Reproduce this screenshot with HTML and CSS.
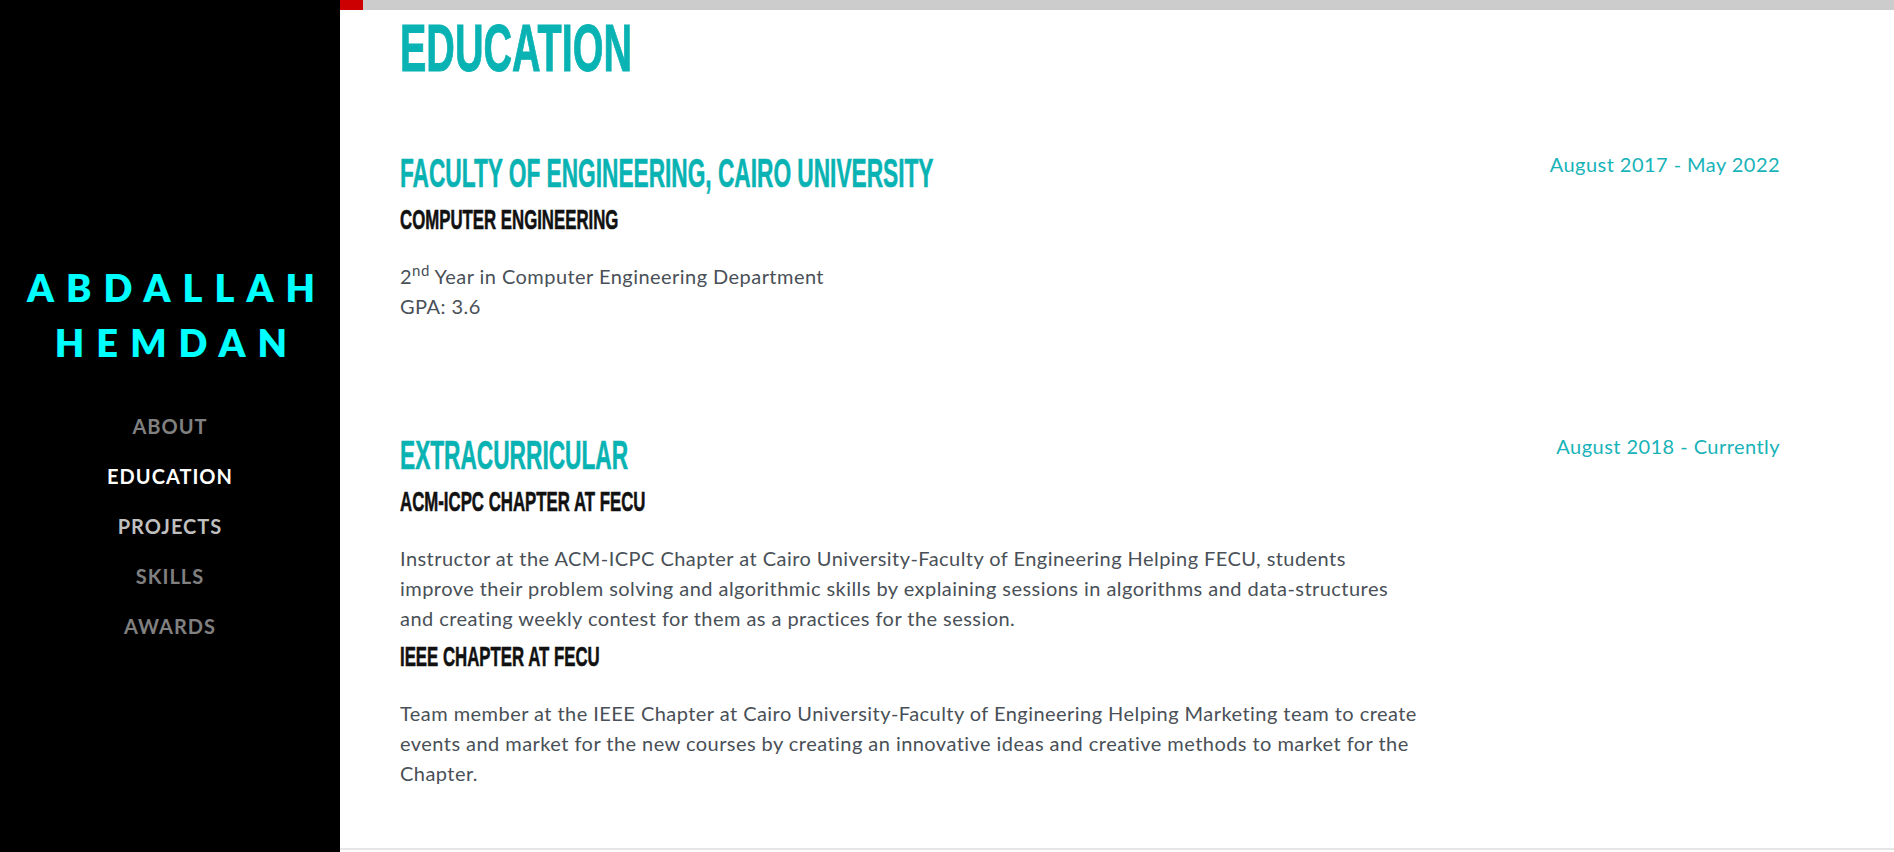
FILE: index.html
```html
<!DOCTYPE html>
<html lang="en">
<head>
<meta charset="utf-8">
<title>Abdallah Hemdan - Resume</title>
<link rel="stylesheet" href="styles.css">
</head>
<body>
<div class="progress-track"><div class="progress-fill"></div></div>
<div class="layout">
  <nav class="sidenav">
    <h1 class="brand"><span>Abdallah</span><span>Hemdan</span></h1>
    <ul class="nav-list">
      <li><a class="nav-link" href="#about">About</a></li>
      <li><a class="nav-link active" href="#education">Education</a></li>
      <li><a class="nav-link hover" href="#projects">Projects</a></li>
      <li><a class="nav-link" href="#skills">Skills</a></li>
      <li><a class="nav-link" href="#awards">Awards</a></li>
    </ul>
  </nav>
  <main class="main">
    <section class="resume-section" id="education">
      <h2 class="section-title"><span class="cond-big">Education</span></h2>
      <div class="resume-item first">
        <div class="resume-content">
          <h3 class="item-title"><span class="cond">Faculty of Engineering, Cairo University</span></h3>
          <div class="subheading"><span class="cond-sub">Computer Engineering</span></div>
          <p class="body-text">2<sup>nd</sup> Year in Computer Engineering Department<br>GPA: 3.6</p>
        </div>
        <div class="resume-date">August 2017 - May 2022</div>
      </div>
      <div class="resume-item">
        <div class="resume-content">
          <h3 class="item-title"><span class="cond">Extracurricular</span></h3>
          <div class="subheading"><span class="cond-sub">ACM-ICPC Chapter at FECU</span></div>
          <p class="body-text tight">Instructor at the ACM-ICPC Chapter at Cairo University-Faculty of Engineering Helping FECU, students improve their problem solving and algorithmic skills by explaining sessions in algorithms and data-structures and creating weekly contest for them as a practices for the session.</p>
          <div class="subheading"><span class="cond-sub">IEEE Chapter at FECU</span></div>
          <p class="body-text">Team member at the IEEE Chapter at Cairo University-Faculty of Engineering Helping Marketing team to create events and market for the new courses by creating an innovative ideas and creative methods to market for the Chapter.</p>
        </div>
        <div class="resume-date">August 2018 - Currently</div>
      </div>
    </section>
    <hr class="divider">
  </main>
</div>
</body>
</html>
```
FILE: styles.css
```css
* { box-sizing: border-box; }
html, body { margin: 0; padding: 0; }
body {
  font-family: Lato, "Noto Sans", sans-serif;
  font-size: 20px;
  line-height: 30px;
  letter-spacing: 0.45px;
  color: #495057;
  background: #fff;
  overflow: hidden;
}
.progress-track {
  position: fixed;
  top: 0;
  left: 340px;
  right: 0;
  height: 10px;
  background: #cccccc;
  z-index: 10;
}
.progress-fill {
  width: 23px;
  height: 100%;
  background: #cc0000;
}
.layout {
  display: flex;
  min-height: 852px;
}
.sidenav {
  width: 340px;
  flex-shrink: 0;
  height: 852px;
  background: #000;
  display: flex;
  flex-direction: column;
  justify-content: center;
  align-items: center;
  padding-top: 58px;
}
.brand {
  margin: 0 0 31px 0;
  font-family: Lato, sans-serif;
  font-weight: 800;
  font-size: 38px;
  line-height: 55px;
  letter-spacing: 12px;
  color: #00ffff;
  text-transform: uppercase;
  text-align: center;
  display: flex;
  flex-direction: column;
  align-items: center;
}
.brand span { padding-left: 14px; }
.nav-list {
  list-style: none;
  margin: 0;
  padding: 0;
  display: flex;
  flex-direction: column;
  align-items: center;
}
.nav-link {
  display: block;
  padding: 10px 0;
  line-height: 30px;
  font-size: 20px;
  font-weight: 700;
  letter-spacing: 1px;
  text-transform: uppercase;
  text-decoration: none;
  color: #808080;
}
.nav-link.active { color: #ffffff; }
.nav-link.hover { color: #bfbfbf; }
.main {
  flex: 1;
  min-width: 0;
}
.resume-section {
  max-width: 1500px;
  padding: 8px 60px 60px 60px;
}
.section-title {
  margin: 0 0 61px 0;
  font-family: "Liberation Sans", Arial, sans-serif;
  font-weight: 700;
  font-size: 67px;
  line-height: 80px;
  letter-spacing: 0;
  color: #0ab3b3;
  text-transform: uppercase;
  -webkit-text-stroke: 1px #0ab3b3;
}
.cond-big {
  display: inline-block;
  transform: scaleX(0.59);
  transform-origin: left center;
  white-space: nowrap;
}
.cond {
  display: inline-block;
  transform: scaleX(0.567);
  transform-origin: left center;
  white-space: nowrap;
}
.cond-sub {
  display: inline-block;
  transform: scaleX(0.6);
  transform-origin: left center;
  white-space: nowrap;
}
.resume-item {
  display: flex;
  justify-content: space-between;
  align-items: flex-start;
}
.resume-item.first { margin-bottom: 110px; }
.resume-content {
  flex: 1;
  min-width: 0;
}
.item-title {
  margin: 0 0 6px 0;
  font-family: "Liberation Sans", Arial, sans-serif;
  font-weight: 700;
  font-size: 40px;
  line-height: 48px;
  letter-spacing: 0;
  color: #0ab3b3;
  text-transform: uppercase;
  -webkit-text-stroke: 0.6px #0ab3b3;
}
.subheading {
  margin: 0 0 24px 0;
  font-family: "Liberation Sans", Arial, sans-serif;
  font-weight: 700;
  font-size: 28px;
  line-height: 34px;
  letter-spacing: 0;
  color: #111;
  text-transform: uppercase;
  -webkit-text-stroke: 0.6px #111;
}
.body-text {
  margin: 0;
  max-width: 1020px;
}
.body-text.tight { margin-bottom: 7px; }
.body-text sup {
  font-size: 15px;
  line-height: 0;
  position: relative;
  vertical-align: baseline;
  top: -8px;
}
.resume-date {
  flex-shrink: 0;
  text-align: right;
  color: #17b3b8;
  line-height: 30px;
}
.divider {
  margin: 0;
  border: 0;
  border-top: 2px solid #e6e6e6;
}
```
